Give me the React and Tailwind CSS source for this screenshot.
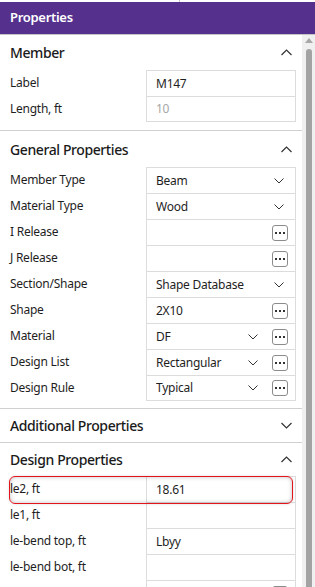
import React from "react";

const FONT = { fontFamily: '"Noto Sans", "Open Sans", sans-serif' };

function ChevronDown() {
  return (
    <svg width="10" height="6" viewBox="0 0 10 6" className="shrink-0">
      <polyline points="0.5,0.5 5,5 9.5,0.5" fill="none" stroke="#333" strokeWidth="1" />
    </svg>
  );
}

function ChevronUp() {
  return (
    <svg width="11" height="7" viewBox="0 0 11 7" className="shrink-0">
      <polyline points="0.5,6 5.5,1 10.5,6" fill="none" stroke="#333" strokeWidth="1.2" />
    </svg>
  );
}

function ChevronDownHeader() {
  return (
    <svg width="11" height="7" viewBox="0 0 11 7" className="shrink-0">
      <polyline points="0.5,1 5.5,6 10.5,1" fill="none" stroke="#333" strokeWidth="1.2" />
    </svg>
  );
}

function Ellipsis() {
  return (
    <div className="w-[16px] h-[16px] shrink-0 border border-[#8c8c8c] rounded-[3px] bg-white flex items-center justify-center gap-[2px]">
      <span className="w-[2px] h-[2px] bg-[#333]" />
      <span className="w-[2px] h-[2px] bg-[#333]" />
      <span className="w-[2px] h-[2px] bg-[#333]" />
    </div>
  );
}

function Row({ label, value, dropdown, button, disabled, last }) {
  return (
    <div className="flex h-[26px] items-stretch">
      <div className="w-[146px] pl-[10px] flex items-center text-[12px] tracking-[-0.25px] text-[#1e1e1e]">{label}</div>
      <div
        className={
          "w-[150px] border-t border-x border-[#dcdcdc] flex items-center pl-[9px] text-[12px] tracking-[-0.25px] " +
          (last ? "border-b " : "") +
          (disabled ? "text-[#a6a6a6]" : "text-[#1e1e1e]")
        }
      >
        <div className="flex-1 truncate">{value}</div>
        {dropdown && button && (
          <>
            <ChevronDown />
            <div className="w-[14px]" />
            <Ellipsis />
            <div className="w-[7px]" />
          </>
        )}
        {dropdown && !button && (
          <>
            <ChevronDown />
            <div className="w-[11px]" />
          </>
        )}
        {!dropdown && button && (
          <>
            <Ellipsis />
            <div className="w-[7px]" />
          </>
        )}
      </div>
    </div>
  );
}

function Header({ title, open, h }) {
  return (
    <div className={"flex items-center justify-between pl-[10px] pr-[10px] " + h}>
      <span className="text-[14px] font-medium tracking-[-0.4px] text-[#1a1a1a]">{title}</span>
      {open ? <ChevronUp /> : <ChevronDownHeader />}
    </div>
  );
}

export default function App() {
  return (
    <div className="w-[315px] h-[587px] overflow-hidden bg-white flex flex-col" style={FONT}>
      <div className="h-[2px] flex shrink-0">
        <div className="w-[179px]" />
        <div className="w-px bg-[#c8c8c8]" />
      </div>
      <div className="h-[33px] shrink-0 bg-[#55308d] border-b border-[#c4c4c4] flex items-center pl-[10px]">
        <span className="text-white text-[13px] font-semibold tracking-[-0.3px]">Properties</span>
      </div>
      <div className="flex flex-1 min-h-0">
        <div className="w-[302px] flex flex-col">
          {/* Member */}
          <div className="pb-[8px] border-b border-[#d0d0d0]">
            <Header title="Member" open h="h-[35px]" />
            <Row label="Label" value="M147" />
            <Row label="Length, ft" value="10" disabled last />
          </div>
          {/* General */}
          <div className="pb-[7px] border-b border-[#d0d0d0]">
            <Header title="General Properties" open h="h-[36px]" />
            <Row label="Member Type" value="Beam" dropdown />
            <Row label="Material Type" value="Wood" dropdown />
            <Row label="I Release" value="" button />
            <Row label="J Release" value="" button />
            <Row label="Section/Shape" value="Shape Database" dropdown />
            <Row label="Shape" value="2X10" button />
            <Row label="Material" value="DF" dropdown button />
            <Row label="Design List" value="Rectangular" dropdown button />
            <Row label="Design Rule" value="Typical" dropdown button last />
          </div>
          {/* Additional */}
          <div className="border-b border-[#d0d0d0]">
            <Header title="Additional Properties" h="h-[33px]" />
          </div>
          {/* Design */}
          <div>
            <Header title="Design Properties" open h="h-[33px]" />
            <div className="relative">
              <Row label="le2, ft" value="18.61" />
              <Row label="le1, ft" value="" />
              <Row label="le-bend top, ft" value="Lbyy" />
              <Row label="le-bend bot, ft" value="" />
              <Row label="" value="" button />
              <div className="absolute left-[9px] top-0 w-[284px] h-[28px] rounded-[6px] border-[1.5px] border-[#e3141c] shadow-[inset_0_0_4px_rgba(0,0,0,0.25),0_0_3px_rgba(0,0,0,0.15)]" />
            </div>
          </div>
        </div>
        <div className="w-[13px] bg-[#f0f0f0] flex flex-col items-center">
          <svg width="8" height="6" viewBox="0 0 8 6" className="mt-[3px]">
            <polygon points="4,0 8,5 0,5" fill="#a8a8a8" />
          </svg>
          <div className="mt-[5px] w-[6px] flex-1 bg-[#a3a3a3] rounded-t-[3px]" />
        </div>
      </div>
    </div>
  );
}
